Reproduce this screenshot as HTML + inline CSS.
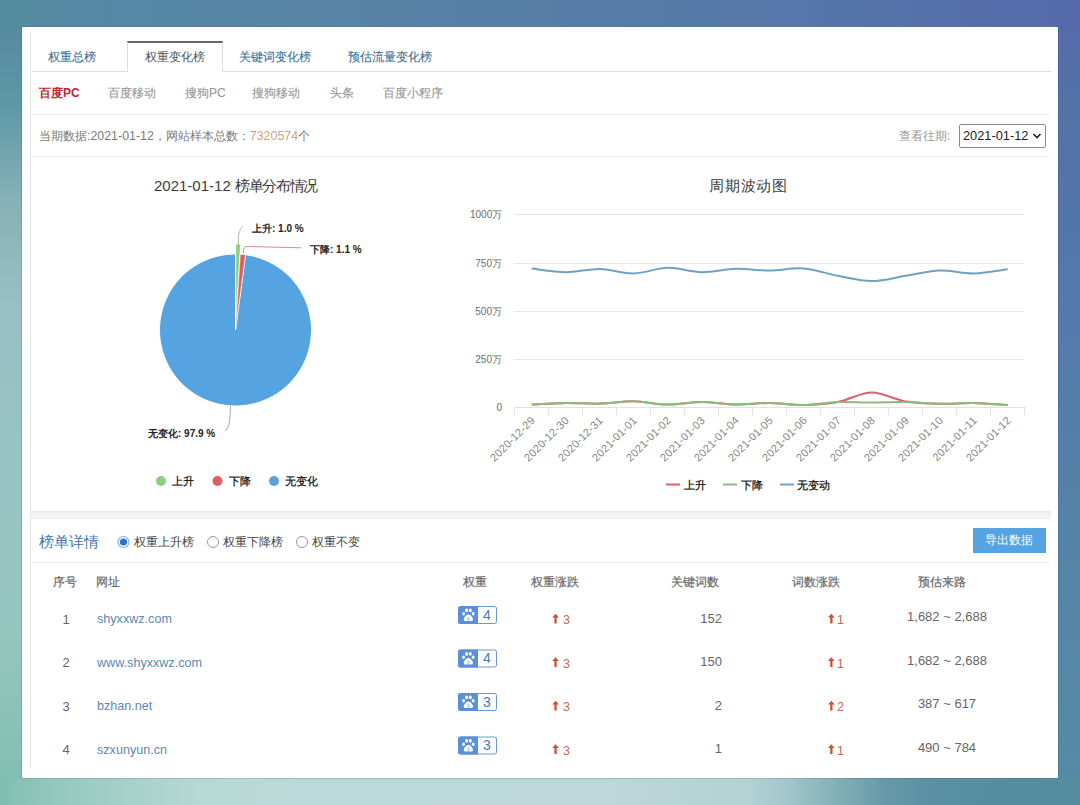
<!DOCTYPE html>
<html><head><meta charset="utf-8">
<style>
*{box-sizing:border-box}
html,body{margin:0;padding:0;width:1080px;height:805px;overflow:hidden}
body{position:relative;font-family:"Liberation Sans",sans-serif;font-size:12px;color:#666;background:#5a8aa0}
svg{position:absolute;left:0;top:0}
.a{position:absolute;white-space:nowrap;line-height:14px;height:14px}
#panel{position:absolute;left:22px;top:27px;width:1036px;height:751px;background:#fff;box-shadow:0 0 0 1px rgba(50,70,90,0.18)}
.hl{position:absolute;height:1px;background:#e8e8e8}
.vl{position:absolute;width:1px;background:#e8e8e8}
.tab{color:#3a7196;-webkit-text-stroke:0.1px #3a7196}
.sub{color:#999;-webkit-text-stroke:0.15px #999}
.th{color:#6a6a6a;-webkit-text-stroke:0.2px #6a6a6a}
.dom{color:#5e88b2;font-size:12.6px}
.num{color:#666;font-size:13px}
.dig{color:#c86a4a;font-size:12.5px}
.lbl{color:#222;font-weight:bold;font-size:10px}
.leg{color:#111;font-weight:normal;font-size:10.5px;-webkit-text-stroke:0.25px #111}
.yl{width:32px;text-align:right;font-size:10px;color:#6e6e6e}
</style></head><body>
<svg id="bg" width="1080" height="805">
<defs>
<linearGradient id="gt" x1="0" y1="0" x2="1" y2="0">
<stop offset="0" stop-color="#548c9e"/><stop offset="0.1" stop-color="#5388a5"/><stop offset="0.29" stop-color="#5784a5"/><stop offset="0.5" stop-color="#567ea7"/><stop offset="0.75" stop-color="#5576a9"/><stop offset="1" stop-color="#5569ab"/>
</linearGradient>
<linearGradient id="gb" x1="0" y1="0" x2="1" y2="0">
<stop offset="0" stop-color="#80beb2"/><stop offset="0.05" stop-color="#92c8bd"/><stop offset="0.185" stop-color="#b8d8d6"/><stop offset="0.37" stop-color="#bcd9d9"/><stop offset="0.555" stop-color="#bcd8d9"/><stop offset="0.694" stop-color="#b4d1d4"/><stop offset="0.73" stop-color="#a2c5ca"/><stop offset="0.778" stop-color="#80aeb6"/><stop offset="0.82" stop-color="#6599a8"/><stop offset="0.87" stop-color="#5890a1"/><stop offset="0.926" stop-color="#548e9f"/><stop offset="1" stop-color="#558ca0"/>
</linearGradient>
<linearGradient id="gl" x1="0" y1="0" x2="0" y2="1">
<stop offset="0" stop-color="#518699"/><stop offset="0.043" stop-color="#558c9f"/><stop offset="0.13" stop-color="#5e98a6"/><stop offset="0.255" stop-color="#88b2b8"/><stop offset="0.38" stop-color="#98bfc4"/><stop offset="0.565" stop-color="#98c4c4"/><stop offset="0.776" stop-color="#96c6bf"/><stop offset="0.963" stop-color="#82bfb3"/><stop offset="1" stop-color="#7ebdb0"/>
</linearGradient>
<linearGradient id="gr" x1="0" y1="0" x2="0" y2="1">
<stop offset="0" stop-color="#5468ab"/><stop offset="0.13" stop-color="#5272a8"/><stop offset="0.38" stop-color="#5479ab"/><stop offset="0.627" stop-color="#5582a8"/><stop offset="0.876" stop-color="#5588a5"/><stop offset="1" stop-color="#568ba4"/>
</linearGradient>
</defs>
<rect x="0" y="0" width="26" height="805" fill="url(#gl)"/>
<rect x="1054" y="0" width="26" height="805" fill="url(#gr)"/>
<rect x="0" y="0" width="1080" height="26" fill="url(#gt)"/>
<rect x="0" y="778" width="1080" height="27" fill="url(#gb)"/>
</svg>
<div id="panel"></div>
<div class="vl" style="left:30px;top:32px;height:737px"></div>

<div class="hl" style="left:32px;top:71px;width:1019px;background:#dddddd"></div>
<div style="position:absolute;left:127px;top:41px;width:96px;height:31px;background:#fff;border:1px solid #dddddd;border-top:2px solid #666;border-bottom:none"></div>
<div class="a tab" style="left:48px;top:50px">权重总榜</div>
<div class="a" style="left:145px;top:50px;color:#555">权重变化榜</div>
<div class="a tab" style="left:239px;top:50px">关键词变化榜</div>
<div class="a tab" style="left:348px;top:50px">预估流量变化榜</div>
<div class="a" style="left:39px;top:86px;color:#c0262e;font-weight:bold">百度PC</div>
<div class="a sub" style="left:108px;top:86px">百度移动</div>
<div class="a sub" style="left:185px;top:86px">搜狗PC</div>
<div class="a sub" style="left:252px;top:86px">搜狗移动</div>
<div class="a sub" style="left:330px;top:86px">头条</div>
<div class="a sub" style="left:383px;top:86px">百度小程序</div>
<div class="hl" style="left:32px;top:114px;width:1017px"></div>
<div class="a" style="left:39px;top:129px;color:#7a7a7a;font-size:12.4px">当期数据:2021-01-12，网站样本总数：<span style="color:#d4a27a">7320574</span>个</div>
<div class="a" style="left:899px;top:129px;color:#999">查看往期:</div>
<div style="position:absolute;left:959px;top:124px;width:87px;height:24px;border:1px solid #888;border-radius:2px;background:#fff"></div>
<div class="a" style="left:963px;top:129px;color:#222;font-size:12.8px">2021-01-12</div>
<svg style="left:1032px;top:132px" width="10" height="8"><path d="M1.5 2 L5 5.5 L8.5 2" fill="none" stroke="#222" stroke-width="1.7"/></svg>
<div class="hl" style="left:32px;top:156px;width:1017px"></div>
<div class="a" style="left:154px;top:177px;color:#3c3c3c;font-size:15px;height:17px;line-height:17px">2021-01-12 <span style="letter-spacing:-1.3px">榜单分布情况</span></div>
<div class="a" style="left:709px;top:177px;color:#3c3c3c;font-size:15px;height:17px;line-height:17px;letter-spacing:0.8px">周期波动图</div>

<svg width="1080" height="805">
<path d="M235.5 330 L245.50 254.66 A76 76 0 1 1 235.50 254.00 Z" fill="#55a3e0" stroke="#fff" stroke-width="1"/>
<path d="M235.8 320 L235.80 244.00 A76 76 0 0 1 240.57 244.15 Z" fill="#90ce7f" stroke="#fff" stroke-width="0.6"/>
<path d="M235.5 330 L240.27 254.15 A76 76 0 0 1 245.50 254.66 Z" fill="#e05f5e" stroke="#fff" stroke-width="0.6"/>
<path d="M238.5 244.5 C238 236 239 230 242.5 226.5" fill="none" stroke="#a0c89a" stroke-width="1"/>
<path d="M243.5 253 L243.8 249 C244 247 245 246.5 248 246.5 L301 247.8" fill="none" stroke="#e08a8a" stroke-width="1"/>
<path d="M230.5 406 C230 418 230 426 225.5 431" fill="none" stroke="#9aaebf" stroke-width="1"/>
<circle cx="161" cy="481" r="5" fill="#90ce7f"/>
<circle cx="217.5" cy="481" r="5" fill="#e05f5e"/>
<circle cx="274" cy="481" r="5" fill="#55a3e0"/>
</svg>
<div class="a lbl" style="left:252px;top:222px">上升: 1.0 %</div>
<div class="a lbl" style="left:310px;top:243px">下降: 1.1 %</div>
<div class="a lbl" style="left:148px;top:427px">无变化: 97.9 %</div>
<div class="a leg" style="left:172px;top:474px">上升</div>
<div class="a leg" style="left:229px;top:474px">下降</div>
<div class="a leg" style="left:285px;top:474px">无变化</div>

<svg width="1080" height="805">
<path d="M514 214.5 H1024 M514 263.5 H1024 M514 311.5 H1024 M514 359.5 H1024" stroke="#e6e6e6" stroke-width="1"/>
<path d="M514 407.5 H1026 M514.5 407.5 V415 M548.5 407.5 V415 M582.5 407.5 V415 M616.5 407.5 V415 M650.5 407.5 V415 M684.5 407.5 V415 M718.5 407.5 V415 M752.5 407.5 V415 M786.5 407.5 V415 M820.5 407.5 V415 M854.5 407.5 V415 M888.5 407.5 V415 M922.5 407.5 V415 M956.5 407.5 V415 M990.5 407.5 V415 M1024.5 407.5 V415 " stroke="#e0e2e6" stroke-width="1"/>
<path d="M531.7 404.6 C537.4 404.3 554.4 403.1 565.7 402.9 C577.0 402.7 588.4 403.9 599.7 403.6 C611.0 403.3 622.4 401.0 633.7 401.2 C645.0 401.4 656.4 404.5 667.7 404.6 C679.0 404.8 690.4 402.1 701.7 402.1 C713.0 402.1 724.4 404.5 735.7 404.6 C747.0 404.8 758.4 402.9 769.7 403.0 C781.0 403.1 792.4 405.2 803.7 405.0 C815.0 404.8 826.4 404.1 837.7 402.0 C849.0 399.9 860.4 392.6 871.7 392.5 C883.0 392.4 894.4 399.6 905.7 401.5 C917.0 403.4 928.4 403.6 939.7 403.8 C951.0 404.1 962.4 402.8 973.7 403.0 C985.0 403.2 1002.0 404.7 1007.7 405.0" fill="none" stroke="#d9636a" stroke-width="2"/>
<path d="M531.7 404.6 C537.4 404.3 554.4 403.1 565.7 402.9 C577.0 402.7 588.4 403.9 599.7 403.6 C611.0 403.3 622.4 401.0 633.7 401.2 C645.0 401.4 656.4 404.5 667.7 404.6 C679.0 404.8 690.4 402.1 701.7 402.1 C713.0 402.1 724.4 404.5 735.7 404.6 C747.0 404.8 758.4 402.9 769.7 403.0 C781.0 403.1 792.4 405.2 803.7 405.0 C815.0 404.8 826.4 402.4 837.7 402.0 C849.0 401.6 860.4 402.5 871.7 402.5 C883.0 402.5 894.4 401.8 905.7 402.0 C917.0 402.2 928.4 403.6 939.7 403.8 C951.0 404.0 962.4 402.8 973.7 403.0 C985.0 403.2 1002.0 404.7 1007.7 405.0" fill="none" stroke="#8cba7c" stroke-width="2"/>
<path d="M531.7 268.5 C537.4 269.1 554.4 272.1 565.7 272.2 C577.0 272.3 588.4 268.8 599.7 269.0 C611.0 269.2 622.4 273.6 633.7 273.4 C645.0 273.2 656.4 268.0 667.7 267.8 C679.0 267.6 690.4 272.0 701.7 272.2 C713.0 272.4 724.4 269.1 735.7 268.8 C747.0 268.5 758.4 270.6 769.7 270.5 C781.0 270.4 792.4 267.6 803.7 268.5 C815.0 269.4 826.4 273.7 837.7 275.8 C849.0 277.9 860.4 281.1 871.7 281.1 C883.0 281.1 894.4 277.6 905.7 275.8 C917.0 274.0 928.4 270.9 939.7 270.5 C951.0 270.1 962.4 273.6 973.7 273.4 C985.0 273.2 1002.0 270.0 1007.7 269.3" fill="none" stroke="#6ea2c0" stroke-width="2"/>
<path d="M666 484.5 H680" stroke="#d9636a" stroke-width="2"/>
<path d="M723 484.5 H737" stroke="#8cba7c" stroke-width="2"/>
<path d="M780 484.5 H794" stroke="#6ea2c0" stroke-width="2"/>
<g font-family="Liberation Sans, sans-serif" font-size="11" fill="#868686" letter-spacing="0.2" text-anchor="end"><text transform="translate(535.7,421) rotate(-45)">2020-12-29</text><text transform="translate(569.7,421) rotate(-45)">2020-12-30</text><text transform="translate(603.7,421) rotate(-45)">2020-12-31</text><text transform="translate(637.7,421) rotate(-45)">2021-01-01</text><text transform="translate(671.7,421) rotate(-45)">2021-01-02</text><text transform="translate(705.7,421) rotate(-45)">2021-01-03</text><text transform="translate(739.7,421) rotate(-45)">2021-01-04</text><text transform="translate(773.7,421) rotate(-45)">2021-01-05</text><text transform="translate(807.7,421) rotate(-45)">2021-01-06</text><text transform="translate(841.7,421) rotate(-45)">2021-01-07</text><text transform="translate(875.7,421) rotate(-45)">2021-01-08</text><text transform="translate(909.7,421) rotate(-45)">2021-01-09</text><text transform="translate(943.7,421) rotate(-45)">2021-01-10</text><text transform="translate(977.7,421) rotate(-45)">2021-01-11</text><text transform="translate(1011.7,421) rotate(-45)">2021-01-12</text></g>
</svg>
<div class="a yl" style="left:470px;top:208px">1000万</div>
<div class="a yl" style="left:470px;top:257px">750万</div>
<div class="a yl" style="left:470px;top:305px">500万</div>
<div class="a yl" style="left:470px;top:353px">250万</div>
<div class="a yl" style="left:470px;top:401px">0</div>
<div class="a leg" style="left:684px;top:478px">上升</div>
<div class="a leg" style="left:741px;top:478px">下降</div>
<div class="a leg" style="left:797px;top:478px">无变动</div>

<div style="position:absolute;left:31px;top:511px;width:1020px;height:8px;background:linear-gradient(#e7e7e7,#f0f0f0 25%,#f3f3f3 75%,#eeeeee)"></div>
<div class="a" style="left:39px;top:533px;font-size:15px;height:18px;line-height:18px;color:#3f78a6">榜单详情</div>
<svg width="1080" height="805">
<circle cx="123.5" cy="542" r="5.5" fill="#fff" stroke="#7fb0e6" stroke-width="1.2"/>
<circle cx="123.5" cy="542" r="3.6" fill="#2a72d0"/>
<circle cx="213" cy="542" r="5.5" fill="#fff" stroke="#9a9a9a" stroke-width="1"/>
<circle cx="302" cy="542" r="5.5" fill="#fff" stroke="#9a9a9a" stroke-width="1"/>
</svg>
<div class="a" style="left:134px;top:535px;color:#444">权重上升榜</div>
<div class="a" style="left:223px;top:535px;color:#444">权重下降榜</div>
<div class="a" style="left:312px;top:535px;color:#444">权重不变</div>
<div style="position:absolute;left:973px;top:528px;width:73px;height:25px;background:#55a3e0;color:#fff;font-size:12px;line-height:25px;text-align:center;text-indent:-2px">导出数据</div>
<div class="hl" style="left:32px;top:562px;width:1017px"></div>
<div class="a th" style="left:53px;top:575px">序号</div>
<div class="a th" style="left:96px;top:575px">网址</div>
<div class="a th" style="left:463px;top:575px">权重</div>
<div class="a th" style="left:531px;top:575px">权重涨跌</div>
<div class="a th" style="left:671px;top:575px">关键词数</div>
<div class="a th" style="left:792px;top:575px">词数涨跌</div>
<div class="a th" style="left:918px;top:575px">预估来路</div>

<div class="a num" style="left:58px;top:612.8px;width:16px;text-align:center">1</div>
<div class="a dom" style="left:97px;top:612.3px">shyxxwz.com</div>
<div class="a" style="left:477px;top:606.8px;width:20px;text-align:center;color:#4a78b8;font-size:14px;line-height:17px;height:17px">4</div>
<div class="a dig" style="left:563px;top:613.3px">3</div>
<div class="a num" style="left:662px;top:611.8px;width:60px;text-align:right">152</div>
<div class="a dig" style="left:837px;top:613.3px">1</div>
<div class="a num" style="left:887px;top:610.3px;width:120px;text-align:center">1,682 ~ 2,688</div>
<div class="a num" style="left:58px;top:656.3px;width:16px;text-align:center">2</div>
<div class="a dom" style="left:97px;top:655.8px">www.shyxxwz.com</div>
<div class="a" style="left:477px;top:650.3px;width:20px;text-align:center;color:#4a78b8;font-size:14px;line-height:17px;height:17px">4</div>
<div class="a dig" style="left:563px;top:656.8px">3</div>
<div class="a num" style="left:662px;top:655.3px;width:60px;text-align:right">150</div>
<div class="a dig" style="left:837px;top:656.8px">1</div>
<div class="a num" style="left:887px;top:653.8px;width:120px;text-align:center">1,682 ~ 2,688</div>
<div class="a num" style="left:58px;top:699.8px;width:16px;text-align:center">3</div>
<div class="a dom" style="left:97px;top:699.3px">bzhan.net</div>
<div class="a" style="left:477px;top:693.8px;width:20px;text-align:center;color:#4a78b8;font-size:14px;line-height:17px;height:17px">3</div>
<div class="a dig" style="left:563px;top:700.3px">3</div>
<div class="a num" style="left:662px;top:698.8px;width:60px;text-align:right">2</div>
<div class="a dig" style="left:837px;top:700.3px">2</div>
<div class="a num" style="left:887px;top:697.3px;width:120px;text-align:center">387 ~ 617</div>
<div class="a num" style="left:58px;top:743.3px;width:16px;text-align:center">4</div>
<div class="a dom" style="left:97px;top:742.8px">szxunyun.cn</div>
<div class="a" style="left:477px;top:737.3px;width:20px;text-align:center;color:#4a78b8;font-size:14px;line-height:17px;height:17px">3</div>
<div class="a dig" style="left:563px;top:743.8px">3</div>
<div class="a num" style="left:662px;top:742.3px;width:60px;text-align:right">1</div>
<div class="a dig" style="left:837px;top:743.8px">1</div>
<div class="a num" style="left:887px;top:740.8px;width:120px;text-align:center">490 ~ 784</div>
<svg width="1080" height="805"><rect x="458.5" y="606.5" width="38" height="17" rx="2" fill="none" stroke="#6c96d0" stroke-width="1"/><path d="M458 608.5 a2.5 2.5 0 0 1 2.5 -2.5 H478 V624.0 H460.5 a2.5 2.5 0 0 1 -2.5 -2.5 Z" fill="#5a90d8"/><g fill="#fff"><ellipse cx="466.6" cy="610.4" rx="1.5" ry="1.8"/><ellipse cx="470.3" cy="610.4" rx="1.5" ry="1.8"/><ellipse cx="463.6" cy="613.8" rx="1.4" ry="1.7"/><ellipse cx="473.2" cy="613.8" rx="1.4" ry="1.7"/><path d="M468.4 614.6 C466.0 614.6 463.8 618.0 463.8 619.6 C463.8 621.4 466.0 621.3 468.4 620.8 C470.8 621.3 473.0 621.4 473.0 619.6 C473.0 618.0 470.8 614.6 468.4 614.6 Z"/></g><circle cx="468.4" cy="618.8" r="1.2" fill="none" stroke="#8fb3e6" stroke-width="0.8"/><path d="M552.2 617.4 L555.55 613.8 L558.9 617.4 H556.7 V623.6 H554.4 V617.4 Z" fill="#cc5232"/><path d="M828.0 617.4 L831.35 613.8 L834.7 617.4 H832.5 V623.6 H830.2 V617.4 Z" fill="#cc5232"/><rect x="458.5" y="650.0" width="38" height="17" rx="2" fill="none" stroke="#6c96d0" stroke-width="1"/><path d="M458 652.0 a2.5 2.5 0 0 1 2.5 -2.5 H478 V667.5 H460.5 a2.5 2.5 0 0 1 -2.5 -2.5 Z" fill="#5a90d8"/><g fill="#fff"><ellipse cx="466.6" cy="653.9" rx="1.5" ry="1.8"/><ellipse cx="470.3" cy="653.9" rx="1.5" ry="1.8"/><ellipse cx="463.6" cy="657.3" rx="1.4" ry="1.7"/><ellipse cx="473.2" cy="657.3" rx="1.4" ry="1.7"/><path d="M468.4 658.1 C466.0 658.1 463.8 661.5 463.8 663.1 C463.8 664.9 466.0 664.8 468.4 664.3 C470.8 664.8 473.0 664.9 473.0 663.1 C473.0 661.5 470.8 658.1 468.4 658.1 Z"/></g><circle cx="468.4" cy="662.3" r="1.2" fill="none" stroke="#8fb3e6" stroke-width="0.8"/><path d="M552.2 660.9 L555.55 657.3 L558.9 660.9 H556.7 V667.1 H554.4 V660.9 Z" fill="#cc5232"/><path d="M828.0 660.9 L831.35 657.3 L834.7 660.9 H832.5 V667.1 H830.2 V660.9 Z" fill="#cc5232"/><rect x="458.5" y="693.5" width="38" height="17" rx="2" fill="none" stroke="#6c96d0" stroke-width="1"/><path d="M458 695.5 a2.5 2.5 0 0 1 2.5 -2.5 H478 V711.0 H460.5 a2.5 2.5 0 0 1 -2.5 -2.5 Z" fill="#5a90d8"/><g fill="#fff"><ellipse cx="466.6" cy="697.4" rx="1.5" ry="1.8"/><ellipse cx="470.3" cy="697.4" rx="1.5" ry="1.8"/><ellipse cx="463.6" cy="700.8" rx="1.4" ry="1.7"/><ellipse cx="473.2" cy="700.8" rx="1.4" ry="1.7"/><path d="M468.4 701.6 C466.0 701.6 463.8 705.0 463.8 706.6 C463.8 708.4 466.0 708.3 468.4 707.8 C470.8 708.3 473.0 708.4 473.0 706.6 C473.0 705.0 470.8 701.6 468.4 701.6 Z"/></g><circle cx="468.4" cy="705.8" r="1.2" fill="none" stroke="#8fb3e6" stroke-width="0.8"/><path d="M552.2 704.4 L555.55 700.8 L558.9 704.4 H556.7 V710.6 H554.4 V704.4 Z" fill="#cc5232"/><path d="M828.0 704.4 L831.35 700.8 L834.7 704.4 H832.5 V710.6 H830.2 V704.4 Z" fill="#cc5232"/><rect x="458.5" y="737.0" width="38" height="17" rx="2" fill="none" stroke="#6c96d0" stroke-width="1"/><path d="M458 739.0 a2.5 2.5 0 0 1 2.5 -2.5 H478 V754.5 H460.5 a2.5 2.5 0 0 1 -2.5 -2.5 Z" fill="#5a90d8"/><g fill="#fff"><ellipse cx="466.6" cy="740.9" rx="1.5" ry="1.8"/><ellipse cx="470.3" cy="740.9" rx="1.5" ry="1.8"/><ellipse cx="463.6" cy="744.3" rx="1.4" ry="1.7"/><ellipse cx="473.2" cy="744.3" rx="1.4" ry="1.7"/><path d="M468.4 745.1 C466.0 745.1 463.8 748.5 463.8 750.1 C463.8 751.9 466.0 751.8 468.4 751.3 C470.8 751.8 473.0 751.9 473.0 750.1 C473.0 748.5 470.8 745.1 468.4 745.1 Z"/></g><circle cx="468.4" cy="749.3" r="1.2" fill="none" stroke="#8fb3e6" stroke-width="0.8"/><path d="M552.2 747.9 L555.55 744.3 L558.9 747.9 H556.7 V754.1 H554.4 V747.9 Z" fill="#cc5232"/><path d="M828.0 747.9 L831.35 744.3 L834.7 747.9 H832.5 V754.1 H830.2 V747.9 Z" fill="#cc5232"/></svg>
</body></html>
